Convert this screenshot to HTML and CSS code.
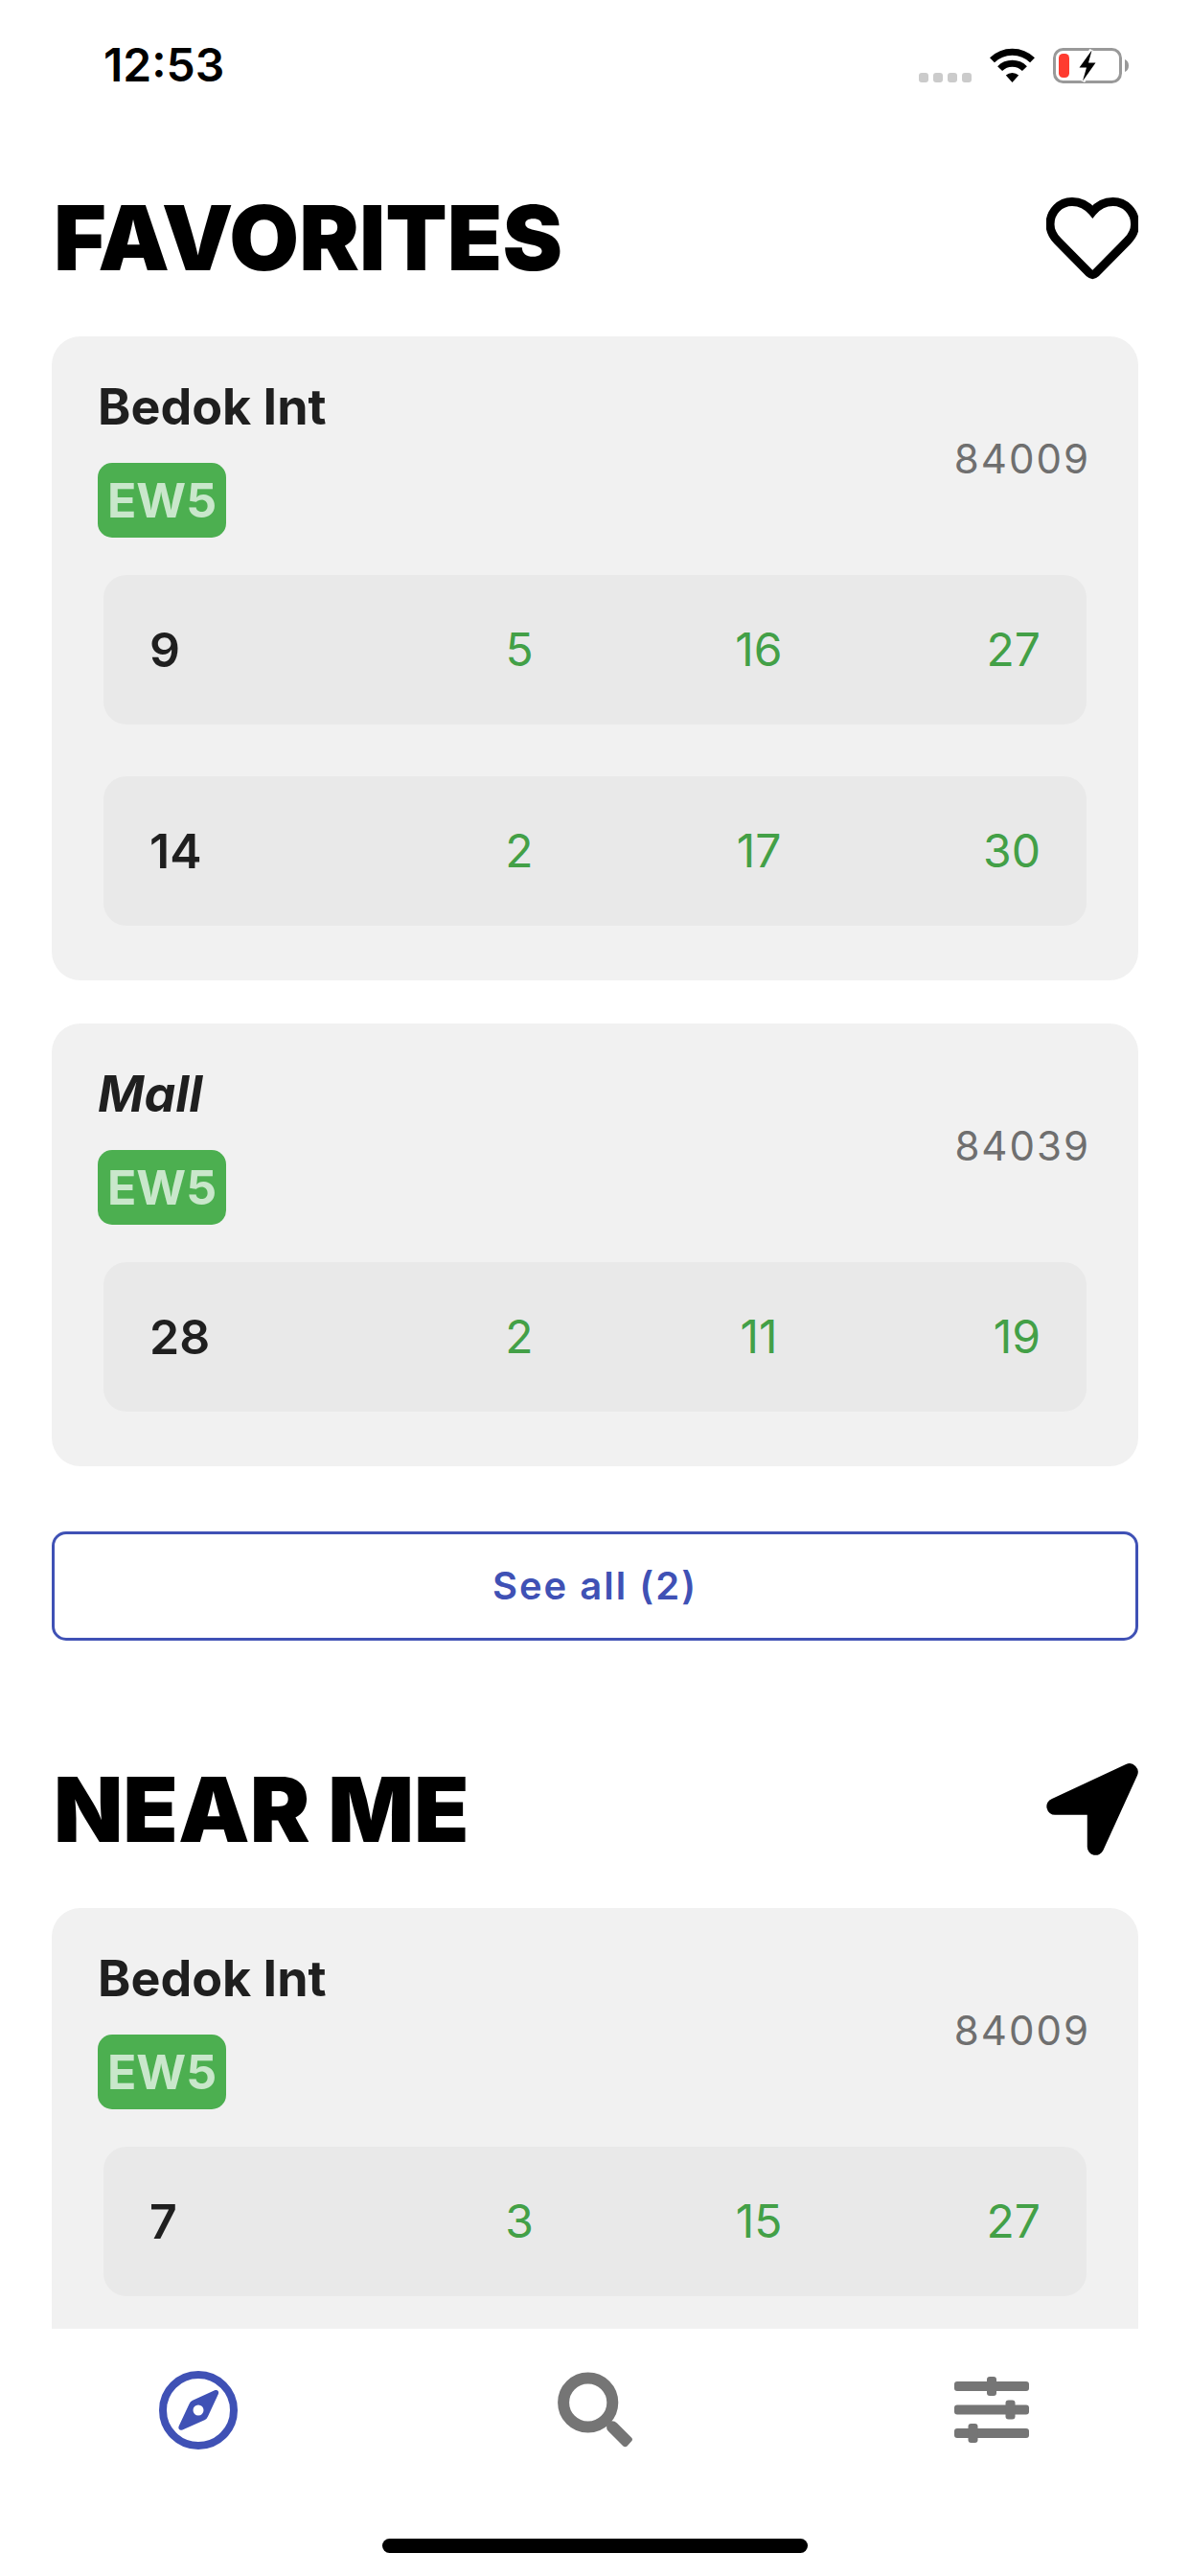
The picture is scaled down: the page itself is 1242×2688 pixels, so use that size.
FILE: index.html
```html
<!DOCTYPE html>
<html lang="en">
<head>
  <meta charset="utf-8">
  <meta name="viewport" content="width=device-width, initial-scale=1">
  <title>Bus arrivals</title>
  <link rel="stylesheet" href="styles.css">
</head>
<body>
  <div class="app">
    <header class="status">
      <time class="status-time">12:53</time>
      <div class="status-icons">
        <svg class="icon-signal" viewBox="0 0 55 37" fill="#cbcbcb" aria-hidden="true">
          <rect x="0" y="26" width="10" height="10" rx="3"/>
          <rect x="15" y="26" width="10" height="10" rx="3"/>
          <rect x="30" y="26" width="10" height="10" rx="3"/>
          <rect x="45" y="26" width="10" height="10" rx="3"/>
        </svg>
        <svg class="icon-wifi" viewBox="0 0 47 37" aria-hidden="true">
          <path d="M2.500 12.800a30 30 0 0 1 42 0" fill="none" stroke="#000" stroke-width="7"/>
          <path d="M10.600 21.600a18.200 18.200 0 0 1 25.800 0" fill="none" stroke="#000" stroke-width="7"/>
          <path d="M23.500 36l-6.700-7.400a9.600 9.600 0 0 1 13.400 0z"/>
        </svg>
        <svg class="icon-battery" viewBox="0 0 79 37" aria-hidden="true">
          <rect x="1.500" y="1.500" width="69" height="34" rx="9" fill="none" stroke="#999" stroke-width="3"/>
          <path d="M75 12c2.700 1 4 3.500 4 6.500s-1.300 5.500-4 6.500z" fill="#999"/>
          <rect x="6" y="6" width="11" height="25" rx="4.500" fill="#ff3b30"/>
          <path d="M40.500 2.500L27.500 20.500h7.500L31 34.500 44.500 15.500H37z" fill="#000" stroke="#fff" stroke-width="5" paint-order="stroke"/>
        </svg>
      </div>
    </header>

    <main class="content">
      <section class="section">
        <div class="section-head">
          <h1 class="section-title">FAVORITES</h1>
          <svg class="section-icon" viewBox="0 0 96 96" aria-hidden="true">
            <path d="M48.300 21C42.500 14 35 10.500 27 10.500C14 10.500 4 21 4 34C4 41.500 7 46.500 12 51.500L45 85Q48.300 88 51.600 85L84.600 51.500C89.600 46.500 92.600 41.500 92.600 34C92.600 21 82.600 10.500 69.600 10.500C61.600 10.500 54 14 48.300 21Z" fill="none" stroke="#000" stroke-width="9"/>
          </svg>
        </div>
        <div class="cards">
          <article class="card">
            <div class="card-head">
              <div class="stop">
                <h2 class="stop-name">Bedok Int</h2>
                <span class="badge">EW5</span>
              </div>
              <span class="stop-code">84009</span>
            </div>
            <ul class="buses">
              <li class="bus"><b class="bus-no">9</b><span class="eta">5</span><span class="eta">16</span><span class="eta eta-last">27</span></li>
              <li class="bus"><b class="bus-no">14</b><span class="eta">2</span><span class="eta">17</span><span class="eta eta-last">30</span></li>
            </ul>
          </article>
          <article class="card">
            <div class="card-head">
              <div class="stop">
                <h2 class="stop-name stop-renamed">Mall</h2>
                <span class="badge">EW5</span>
              </div>
              <span class="stop-code">84039</span>
            </div>
            <ul class="buses">
              <li class="bus"><b class="bus-no">28</b><span class="eta">2</span><span class="eta">11</span><span class="eta eta-last">19</span></li>
            </ul>
          </article>
        </div>
        <button class="see-all" type="button">See all (2)</button>
      </section>

      <section class="section">
        <div class="section-head">
          <h1 class="section-title">NEAR ME</h1>
          <svg class="section-icon" viewBox="0 0 96 97" aria-hidden="true">
            <path d="M42.700 54.300H9a8.800 8.800 0 0 1-3.500-17L83.500 1a9 9 0 0 1 11.800 12.100L59.500 91.700a8.800 8.800 0 0 1-16.800-3.500z"/>
          </svg>
        </div>
        <div class="cards">
          <article class="card card-continued">
            <div class="card-head">
              <div class="stop">
                <h2 class="stop-name">Bedok Int</h2>
                <span class="badge">EW5</span>
              </div>
              <span class="stop-code">84009</span>
            </div>
            <ul class="buses">
              <li class="bus"><b class="bus-no">7</b><span class="eta">3</span><span class="eta">15</span><span class="eta eta-last">27</span></li>
            </ul>
          </article>
        </div>
      </section>
    </main>

    <footer class="footer">
      <nav class="tabs">
        <a class="tab tab-active" href="#explore" aria-label="Explore">
          <svg class="tab-icon" viewBox="0 0 82 82" fill="currentColor" aria-hidden="true">
            <circle cx="41" cy="41" r="37" fill="none" stroke="currentColor" stroke-width="8"/>
            <path fill-rule="evenodd" d="M58 20.300c2.800-1.200 5 .9 3.900 3.700L51 47.500q-1 2.500-3.500 3.700L24.500 61.500c-2.800 1.200-5-.9-3.900-3.700L31.500 34.500q1-2.500 3.500-3.700zM41 35.500a5.500 5.500 0 1 0 0 11 5.500 5.500 0 0 0 0-11z"/>
          </svg>
        </a>
        <a class="tab" href="#search" aria-label="Search">
          <svg class="tab-icon" viewBox="0 0 82 82" fill="currentColor" aria-hidden="true">
            <circle cx="33.700" cy="33" r="25.600" fill="none" stroke="currentColor" stroke-width="12"/>
            <path d="M53 57.500L58 52.300Q61.500 52 64 54.500L79 69.500Q81 71.500 79 73.500L74.500 78.500Q72.500 80 70.500 78.500L54.500 62.500Q53 61 53 57.500z"/>
          </svg>
        </a>
        <a class="tab" href="#settings" aria-label="Settings">
          <svg class="tab-icon" viewBox="0 0 82 82" fill="currentColor" aria-hidden="true">
            <rect x="2" y="11" width="78" height="10" rx="3"/>
            <rect x="36" y="6" width="10" height="20" rx="3"/>
            <rect x="2" y="35.500" width="78" height="10" rx="3"/>
            <rect x="55.500" y="30.500" width="10" height="20" rx="3"/>
            <rect x="2" y="60" width="78" height="10" rx="3"/>
            <rect x="16.500" y="55" width="10" height="20" rx="3"/>
          </svg>
        </a>
      </nav>
      <div class="home-bar"></div>
    </footer>
  </div>
</body>
</html>
```
FILE: styles.css
```css
* {
  box-sizing: border-box;
}

body {
  margin: 0;
  background: #fff;
  color: #1f1f1f;
  font-family: Inter, "Liberation Sans", sans-serif;
}

h1,
h2,
ul {
  margin: 0;
  padding: 0;
}

.app {
  display: flex;
  flex-direction: column;
  height: 100vh;
}

/* Status bar */
.status {
  display: flex;
  flex: none;
  justify-content: space-between;
  align-items: center;
  height: 136px;
  padding: 0 64px 0 108px;
  color: #000;
}

.status-time {
  font-size: 48px;
  font-weight: 600;
  line-height: 60px;
}

.status-icons {
  display: flex;
  align-items: center;
  gap: 19px;
}

.icon-signal {
  width: 55px;
  height: 37px;
}

.icon-wifi {
  width: 47px;
  height: 37px;
}

.icon-battery {
  width: 79px;
  height: 37px;
}

/* Scrolling content */
.content {
  display: flex;
  flex: 1;
  flex-direction: column;
  gap: 128px;
  min-height: 0;
  padding: 64px 54px 0;
  overflow-y: auto;
  scrollbar-width: none;
}

.section {
  flex: none;
}

.section-head {
  display: flex;
  justify-content: space-between;
  align-items: center;
  margin-bottom: 55px;
  padding-left: 2px;
  color: #000;
}

.section-title {
  font-size: 94px;
  font-weight: 900;
  line-height: 96px;
}

.section-icon {
  width: 96px;
  height: 96px;
}

.cards {
  display: flex;
  flex-direction: column;
  gap: 45px;
}

.card {
  padding: 44px 54px 57px;
  border-radius: 30px;
  background: #f1f1f1;
}

.card-continued {
  padding-bottom: 96px;
}

.card-head {
  display: flex;
  justify-content: space-between;
  align-items: center;
  margin: 0 -4px 39px -6px;
}

.stop {
  display: flex;
  flex-direction: column;
  align-items: flex-start;
  gap: 28px;
}

.stop-name {
  font-size: 52px;
  font-weight: 700;
  line-height: 60px;
}

.stop-renamed {
  font-style: italic;
}

.badge {
  padding: 0 10px;
  border-radius: 15px;
  background: #4caf50;
  color: #c9e7cb;
  font-size: 50px;
  font-weight: 700;
  line-height: 78px;
}

.stop-code {
  color: #6f6f6f;
  font-size: 42px;
  letter-spacing: 2px;
}

.buses {
  display: flex;
  flex-direction: column;
  gap: 54px;
  list-style: none;
}

.bus {
  display: grid;
  grid-template-columns: 261fr 250fr 250fr 169fr;
  align-items: center;
  padding: 48px;
  border-radius: 24px;
  background: #e9e9e9;
  line-height: 60px;
}

.bus-no {
  font-size: 50px;
  font-weight: 600;
}

.eta {
  color: #43a047;
  font-size: 48px;
  text-align: center;
}

.eta-last {
  text-align: right;
}

.see-all {
  display: block;
  width: 100%;
  margin-top: 68px;
  padding: 24px;
  border: 3px solid #3f51b5;
  border-radius: 15px;
  background: #fff;
  color: #3f51b5;
  font-family: inherit;
  font-size: 40px;
  font-weight: 600;
  line-height: 60px;
  letter-spacing: 2px;
}

/* Bottom navigation */
.footer {
  display: flex;
  flex: none;
  flex-direction: column;
  align-items: center;
  padding-bottom: 24px;
  background: #fff;
}

.tabs {
  display: grid;
  grid-template-columns: repeat(3, 1fr);
  width: 100%;
  padding: 44px 0 93px;
}

.tab {
  display: flex;
  justify-content: center;
  color: #757575;
}

.tab-active {
  color: #3f51b5;
}

.tab-icon {
  width: 82px;
  height: 82px;
}

.home-bar {
  width: 444px;
  height: 15px;
  border-radius: 8px;
  background: #000;
}
```
